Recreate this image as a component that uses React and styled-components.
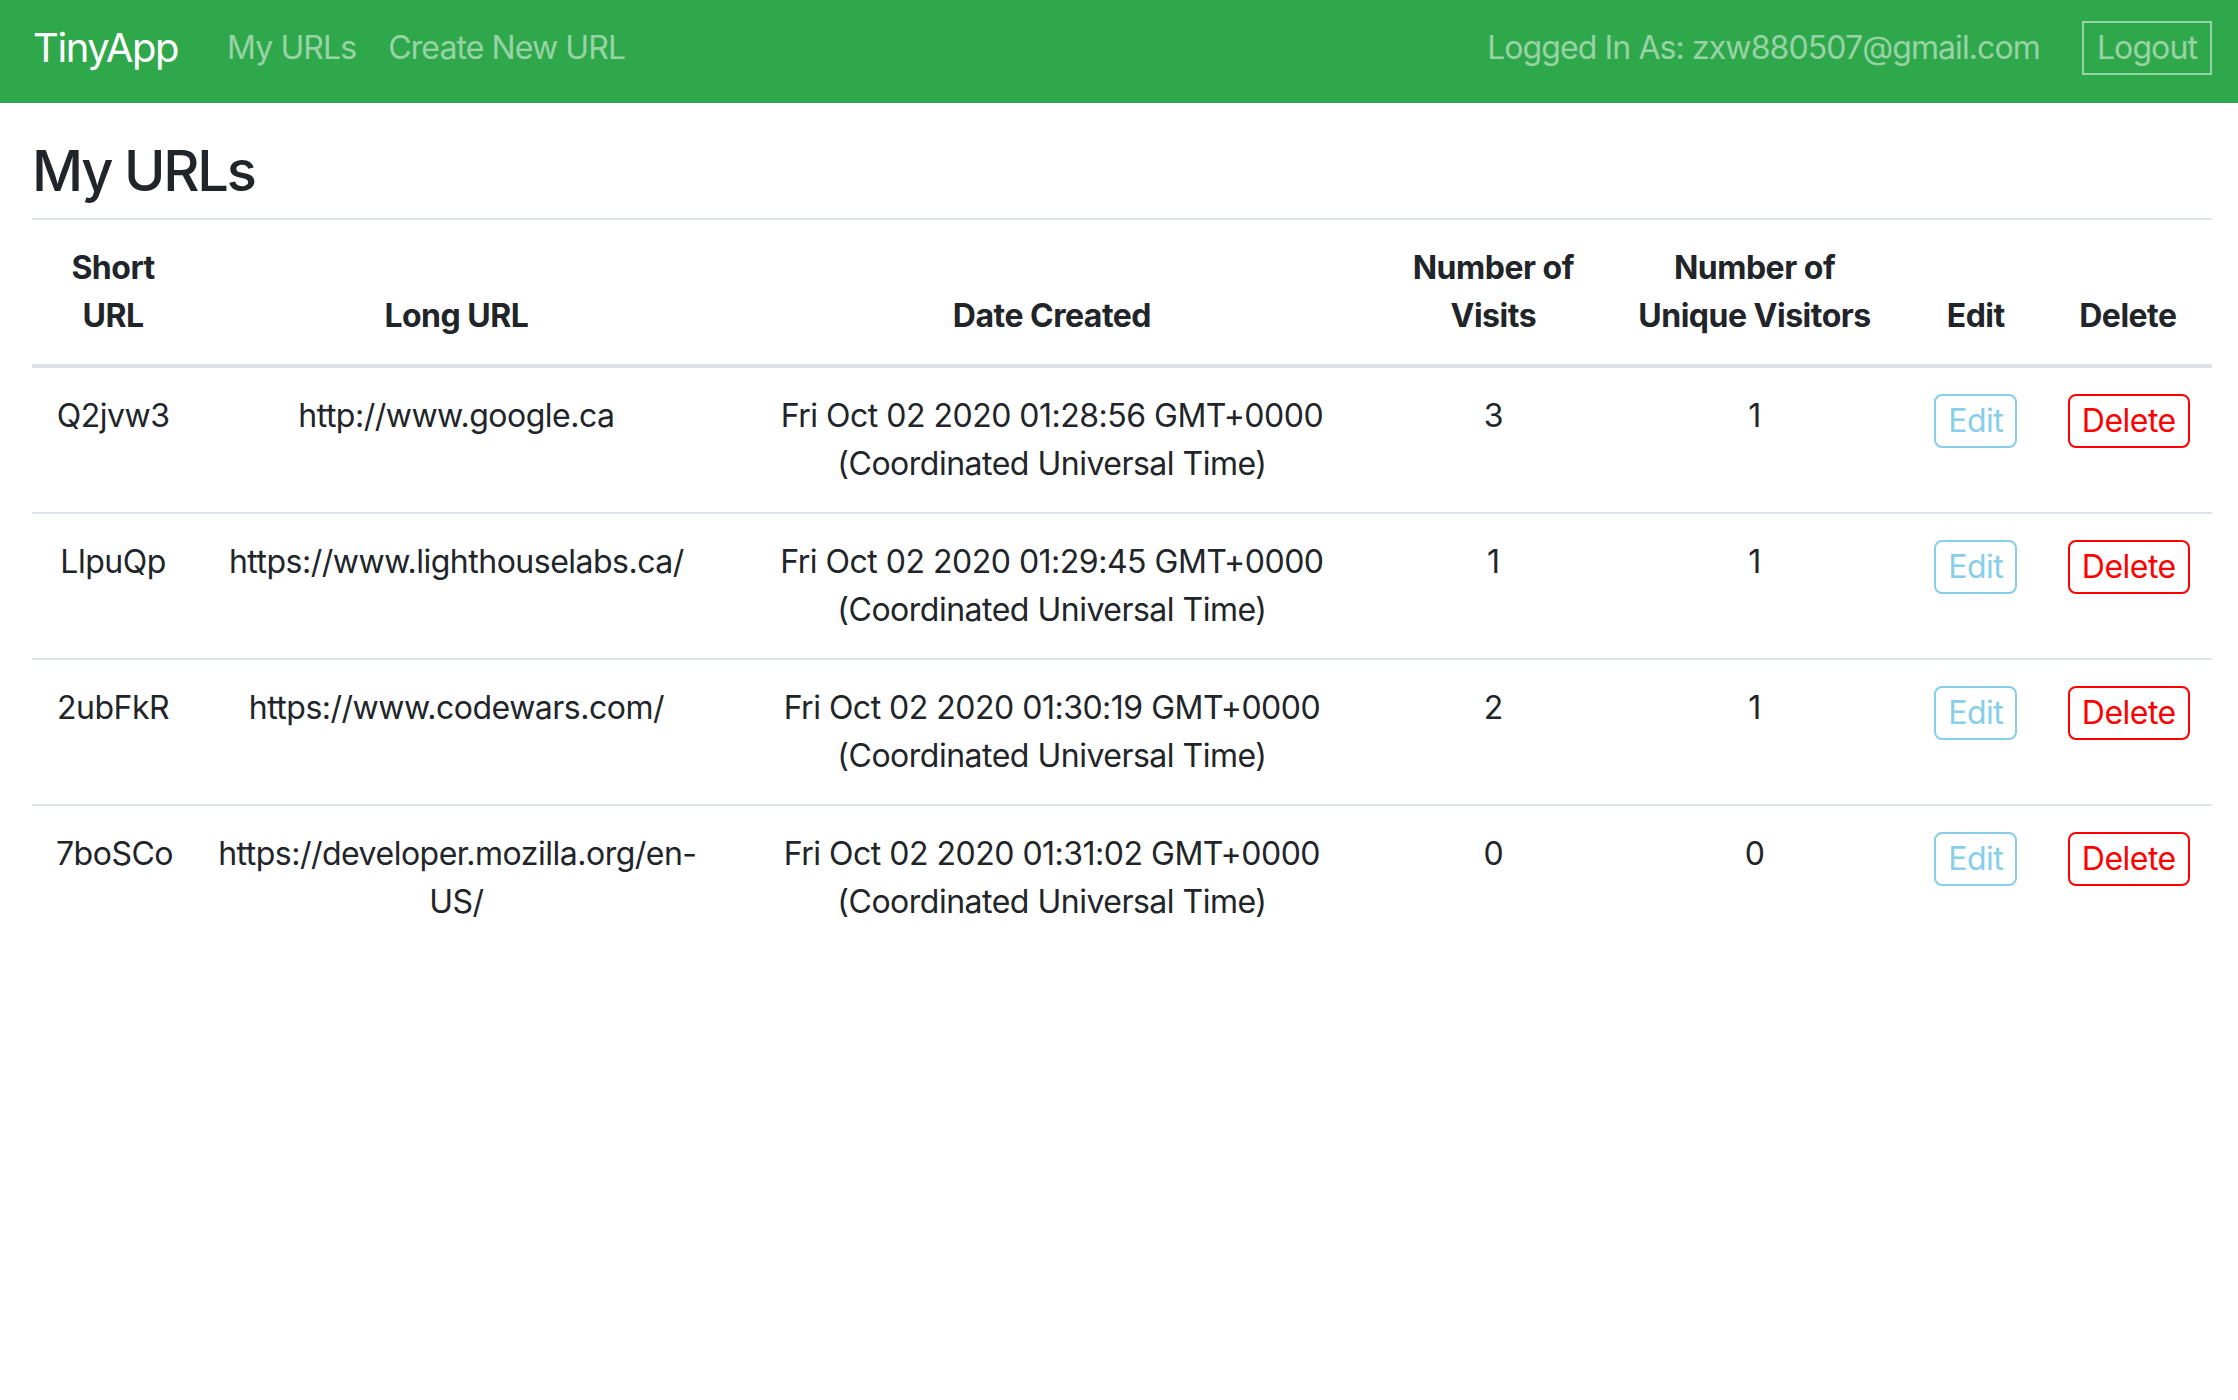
import React from 'react';
import styled, { createGlobalStyle } from 'styled-components';

const GlobalStyle = createGlobalStyle`
  html, body {
    margin: 0;
    padding: 0;
    background: #fff;
  }
  body {
    font-family: Inter, "Liberation Sans", sans-serif;
    font-size: 32px;
    line-height: 1.5;
    color: #212529;
    letter-spacing: -0.5px;
  }
  * {
    box-sizing: border-box;
  }
`;

const urls = [
  { id: 'Q2jvw3', long: 'http://www.google.ca', date: 'Fri Oct 02 2020 01:28:56 GMT+0000 (Coordinated Universal Time)', visits: 3, unique: 1 },
  { id: 'LlpuQp', long: 'https://www.lighthouselabs.ca/', date: 'Fri Oct 02 2020 01:29:45 GMT+0000 (Coordinated Universal Time)', visits: 1, unique: 1 },
  { id: '2ubFkR', long: 'https://www.codewars.com/', date: 'Fri Oct 02 2020 01:30:19 GMT+0000 (Coordinated Universal Time)', visits: 2, unique: 1 },
  { id: '7boSCo', long: 'https://developer.mozilla.org/en-US/', date: 'Fri Oct 02 2020 01:31:02 GMT+0000 (Coordinated Universal Time)', visits: 0, unique: 0 },
];

const colWidths = [162, 524, 666, 216, 306, 136, 168];

const Navbar = () => (
  <NavbarStyled>
    <Brand href="#">TinyApp</Brand>
    <NavLink href="#">My URLs</NavLink>
    <NavLink href="#">Create New URL</NavLink>
    <UserInfo>Logged In As: zxw880507@gmail.com</UserInfo>
    <LogoutButton type="button">Logout</LogoutButton>
  </NavbarStyled>
);

const App = () => {
  return (
    <>
      <GlobalStyle />
      <Navbar />
      <Main>
        <Title>My URLs</Title>
        <Table>
          <colgroup>
            {colWidths.map((w, i) => (
              <col key={i} style={{ width: w }} />
            ))}
          </colgroup>
          <thead>
            <tr>
              <Th>Short<br />URL</Th>
              <Th>Long URL</Th>
              <Th>Date Created</Th>
              <Th>Number of<br />Visits</Th>
              <Th>Number of<br />Unique Visitors</Th>
              <Th>Edit</Th>
              <Th>Delete</Th>
            </tr>
          </thead>
          <tbody>
            {urls.map((u) => (
              <Row key={u.id}>
                <Td>{u.id}</Td>
                <Td>{u.long}</Td>
                <Td>{u.date}</Td>
                <Td>{u.visits}</Td>
                <Td>{u.unique}</Td>
                <Td>
                  <ActionButton $variant="edit">Edit</ActionButton>
                </Td>
                <Td>
                  <ActionButton $variant="delete">Delete</ActionButton>
                </Td>
              </Row>
            ))}
          </tbody>
        </Table>
      </Main>
    </>
  );
};

const NavbarStyled = styled.nav`
  display: flex;
  align-items: center;
  height: 103px;
  padding: 0 26px 7px 33px;
  background-color: #2fa84c;
  letter-spacing: -0.9px;
`;

const Brand = styled.a`
  font-size: 40px;
  line-height: 60px;
  letter-spacing: -1.4px;
  color: #fff;
  text-decoration: none;
  margin-right: 33px;
`;

const NavLink = styled.a`
  padding: 0 16px;
  font-size: 32px;
  line-height: 48px;
  color: rgba(255, 255, 255, 0.5);
  text-decoration: none;
`;

const UserInfo = styled.span`
  margin-left: auto;
  margin-right: 42px;
  font-size: 32px;
  line-height: 48px;
  color: rgba(255, 255, 255, 0.5);
`;

const LogoutButton = styled.button`
  font-family: inherit;
  letter-spacing: inherit;
  font-size: 32px;
  line-height: 44px;
  padding: 3px 13px;
  background: transparent;
  color: rgba(255, 255, 255, 0.5);
  border: 2px solid rgba(255, 255, 255, 0.5);
  border-radius: 0;
`;

const Main = styled.main`
  padding: 35px 26px 0 32px;
`;

const Title = styled.h3`
  margin: 0 0 13px;
  font-size: 56px;
  font-weight: 500;
  line-height: 1.2;
  letter-spacing: -2.2px;
`;

const Table = styled.table`
  width: 100%;
  border-collapse: collapse;
  table-layout: fixed;
  border-top: 2px solid #dee2e6;
`;

const Th = styled.th`
  padding: 24px;
  font-weight: 700;
  text-align: center;
  vertical-align: bottom;
  line-height: 48px;
  border-bottom: 4px solid #dee2e6;
`;

const Row = styled.tr`
  & + & td {
    border-top: 2px solid #dee2e6;
  }
`;

const Td = styled.td`
  padding: 24px;
  text-align: center;
  vertical-align: top;
  line-height: 48px;
`;

const ActionButton = styled.button`
  display: inline-block;
  vertical-align: top;
  margin-top: 2px;
  font-family: inherit;
  letter-spacing: inherit;
  font-size: 32px;
  line-height: 44px;
  padding: 3px 12px;
  background: #fff;
  border-radius: 8px;
  border: 2px solid ${({ $variant }) => ($variant === 'delete' ? '#ff0000' : '#87ceeb')};
  color: ${({ $variant }) => ($variant === 'delete' ? '#ff0000' : '#87ceeb')};
`;

export default App;
